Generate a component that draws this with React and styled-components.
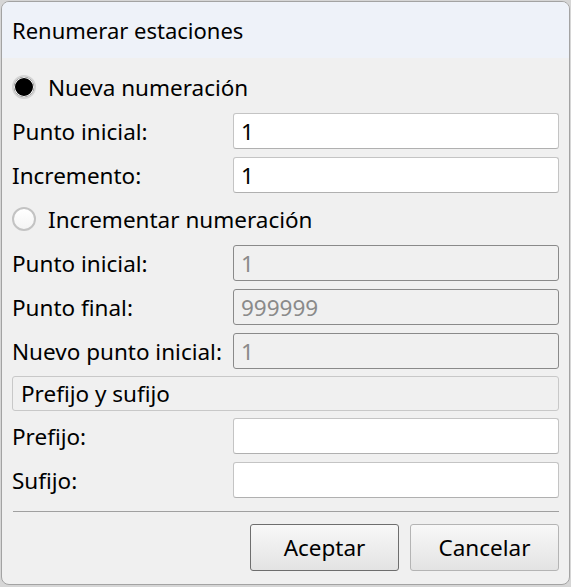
import React from 'react'
import styled, { createGlobalStyle } from 'styled-components'

const Global = createGlobalStyle`
  html, body {
    margin: 0;
    padding: 0;
    background: #d6d6d6;
  }
  body {
    font-family: "Noto Sans", "Open Sans", sans-serif;
    color: #000;
  }
`

const App = () => {
  return (
    <>
      <Global />
      <Dialog>
        <TitleBar>Renumerar estaciones</TitleBar>
        <Content>
          <RadioRow>
            <Radio checked />
            <span>Nueva numeración</span>
          </RadioRow>
          <Row>
            <Label>Punto inicial:</Label>
            <Input defaultValue="1" />
          </Row>
          <Row>
            <Label>Incremento:</Label>
            <Input defaultValue="1" />
          </Row>
          <RadioRow>
            <Radio />
            <span>Incrementar numeración</span>
          </RadioRow>
          <Row>
            <Label>Punto inicial:</Label>
            <Input defaultValue="1" disabled />
          </Row>
          <Row>
            <Label>Punto final:</Label>
            <Input defaultValue="999999" disabled />
          </Row>
          <Row>
            <Label>Nuevo punto inicial:</Label>
            <Input defaultValue="1" disabled />
          </Row>
          <GroupBox>Prefijo y sufijo</GroupBox>
          <Row>
            <Label>Prefijo:</Label>
            <Input />
          </Row>
          <Row>
            <Label>Sufijo:</Label>
            <Input />
          </Row>
          <Separator />
          <Buttons>
            <Button primary>Aceptar</Button>
            <Button>Cancelar</Button>
          </Buttons>
        </Content>
      </Dialog>
    </>
  )
}

const Dialog = styled.div`
  margin: 1px;
  width: 567px;
  height: 582px;
  border: 1px solid #a3a3a3;
  border-radius: 8px;
  overflow: hidden;
  background: #f0f0f0;
  display: flex;
  flex-direction: column;
`
const TitleBar = styled.div`
  height: 56px;
  padding-left: 10px;
  display: flex;
  align-items: center;
  background: #eef2f9;
  font-size: 22px;
`
const Content = styled.div`
  padding: 11px 10px 0 8px;
  display: flex;
  flex-direction: column;
  gap: 8px;
  font-size: 22.5px;
`
const RadioRow = styled.div`
  height: 36px;
  padding-left: 2px;
  display: flex;
  align-items: center;
  gap: 12px;
`
const Radio = styled.span`
  width: 20px;
  height: 20px;
  border-radius: 50%;
  border: 2px solid ${p => (p.checked ? '#d4d4d4' : '#c3c3c3')};
  background: ${p => (p.checked ? '#000' : 'linear-gradient(#ffffff, #f4f4f4)')};
  box-shadow: ${p => (p.checked ? 'inset 0 0 0 1px #fff' : 'none')};
`
const Row = styled.div`
  height: 36px;
  display: grid;
  grid-template-columns: 223px 1fr;
  align-items: center;
`
const Label = styled.span`
  padding-left: 2px;
  white-space: nowrap;
`
const Input = styled.input`
  box-sizing: border-box;
  height: 36px;
  width: 100%;
  padding: 0 7px;
  font: inherit;
  color: #000;
  background: #fff;
  border: 1px solid #c4c4c4;
  border-bottom-color: #b0b0b0;
  border-radius: 3px;
  outline: none;
  &:disabled {
    background: #f0f0f0;
    border-color: #8a8a8a;
    color: #8a8a8a;
  }
`
const GroupBox = styled.div`
  height: 35px;
  margin: -1px 0 -1px 2px;
  box-sizing: border-box;
  display: flex;
  align-items: center;
  padding-left: 8px;
  border: 1px solid #c8c8c8;
  border-radius: 3px;
`
const Separator = styled.div`
  height: 1px;
  margin: 5px 0 4px 3px;
  background: #a0a0a0;
`
const Buttons = styled.div`
  display: flex;
  justify-content: flex-end;
  gap: 11px;
`
const Button = styled.button`
  width: 149px;
  height: 47px;
  font: inherit;
  color: #000;
  border: 1px solid ${p => (p.primary ? '#6e6e6e' : '#b4b4b4')};
  border-radius: 3px;
  background: linear-gradient(#f8f8f8, #e3e3e3);
`

export default App
